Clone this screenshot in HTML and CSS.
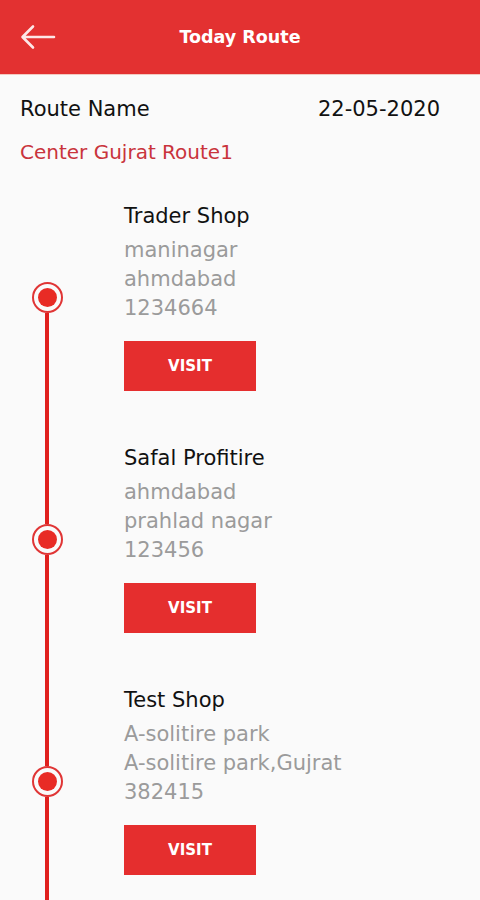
FILE: index.html
```html
<!DOCTYPE html>
<html>
<head>
    <title>Today Route</title>
    <link rel="stylesheet" href="styles.css">
</head>
<body>
    <div class="topbar">
        <svg class="back" width="36" height="26" viewBox="0 0 36 26">
            <path d="M34 13H3M13 2.5L2.5 13L13 23.5" fill="none" stroke="#fde7e7" stroke-width="2.6" stroke-linecap="round" stroke-linejoin="round"/>
        </svg>
        <div class="title">Today Route</div>
        <div></div>
    </div>

    <div class="route-info">
        <div class="route-head">
            <span>Route Name</span>
            <span>22-05-2020</span>
        </div>
        <div class="route-name">Center Gujrat Route1</div>
    </div>

    <div class="timeline">
        <div class="stop first">
            <div class="rail">
                <div class="seg top"></div>
                <div class="dot"></div>
                <div class="seg"></div>
            </div>
            <div class="stop-body">
                <div class="shop">Trader Shop</div>
                <div class="addr">maninagar</div>
                <div class="addr">ahmdabad</div>
                <div class="addr">1234664</div>
                <button class="visit">VISIT</button>
            </div>
        </div>
        <div class="stop">
            <div class="rail">
                <div class="seg top"></div>
                <div class="dot"></div>
                <div class="seg"></div>
            </div>
            <div class="stop-body">
                <div class="shop">Safal Profitire</div>
                <div class="addr">ahmdabad</div>
                <div class="addr">prahlad nagar</div>
                <div class="addr">123456</div>
                <button class="visit">VISIT</button>
            </div>
        </div>
        <div class="stop">
            <div class="rail">
                <div class="seg top"></div>
                <div class="dot"></div>
                <div class="seg"></div>
            </div>
            <div class="stop-body">
                <div class="shop">Test Shop</div>
                <div class="addr">A-solitire park</div>
                <div class="addr">A-solitire park,Gujrat</div>
                <div class="addr">382415</div>
                <button class="visit">VISIT</button>
            </div>
        </div>
    </div>
</body>
</html>
```

FILE: styles.css
```css
body {
    margin: 0;
    background: #fafafa;
    font-family: "DejaVu Sans", sans-serif;
    color: #111;
    overflow: hidden;
}
.topbar {
    height: 74px;
    background: #e33131;
    display: grid;
    grid-template-columns: 80px 1fr 80px;
    align-items: center;
    border-bottom: 1px solid #f3c9c0;
}
.back {
    margin-left: 20px;
}
.title {
    text-align: center;
    color: #fff;
    font-size: 17.5px;
    font-weight: bold;
}
.route-info {
    padding: 20px 40px 0 20px;
}
.route-head {
    display: flex;
    justify-content: space-between;
    font-size: 21px;
    line-height: 29px;
}
.route-name {
    margin-top: 14px;
    color: #c9343c;
    font-size: 20px;
    line-height: 29px;
}
.timeline {
    margin-top: 9px;
}
.stop {
    display: grid;
    grid-template-columns: 94px 1fr;
}
.rail {
    display: flex;
    flex-direction: column;
    align-items: center;
}
.seg {
    flex: 1;
    width: 4px;
    background: #e0201e;
}
.first .seg.top {
    background: transparent;
}
.dot {
    width: 19px;
    height: 19px;
    border: 2.5px solid #e03535;
    border-radius: 50%;
    padding: 4px;
    background: #e82b25;
    background-clip: content-box;
}
.stop-body {
    padding: 26px 0 27px 30px;
}
.shop {
    font-size: 21px;
    line-height: 29px;
    color: #111;
    margin-bottom: 5px;
}
.addr {
    font-size: 21px;
    line-height: 29px;
    color: #9b9b9b;
}
.visit {
    display: block;
    margin-top: 18px;
    width: 132px;
    height: 50px;
    border: none;
    background: #e52e2e;
    color: #fff;
    font-family: inherit;
    font-size: 15px;
    font-weight: bold;
    cursor: pointer;
}
```
